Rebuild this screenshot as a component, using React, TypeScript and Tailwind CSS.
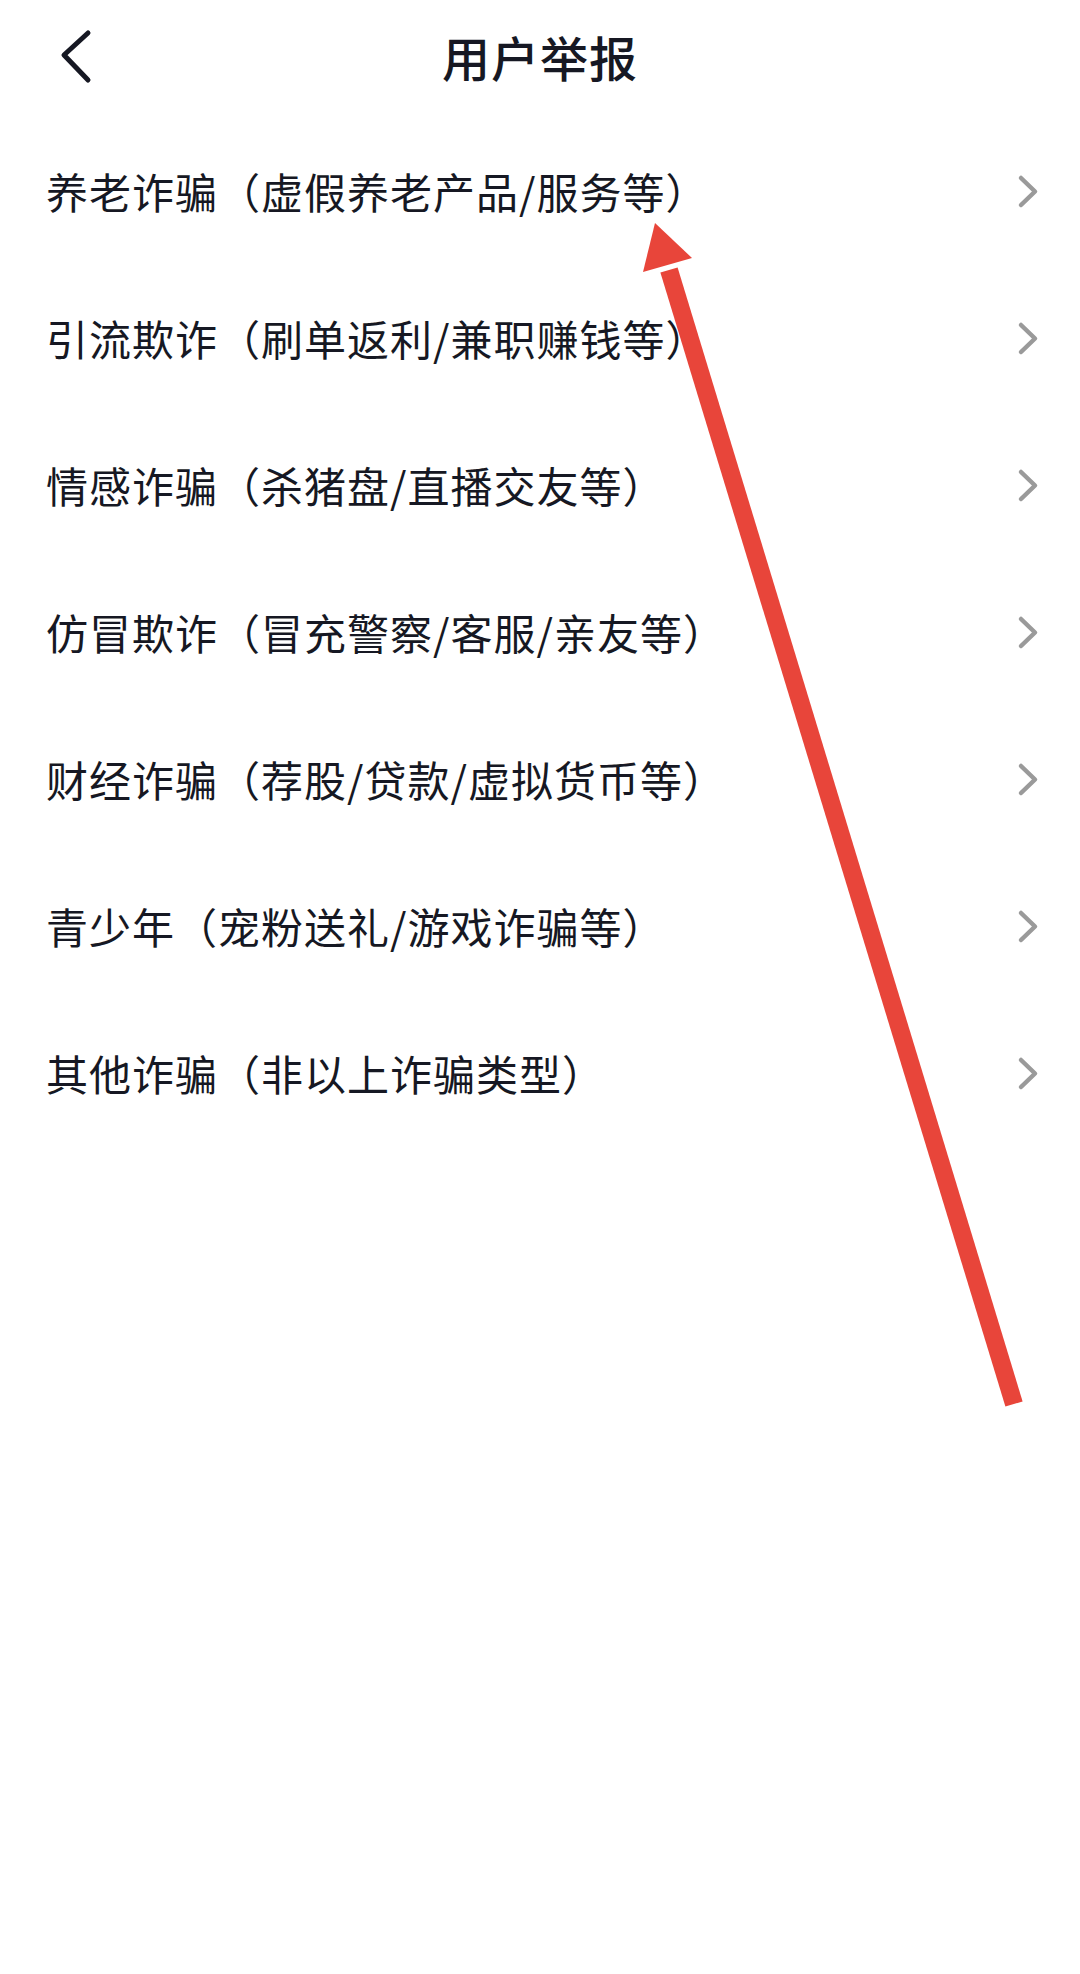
const items = [
  "养老诈骗（虚假养老产品/服务等）",
  "引流欺诈（刷单返利/兼职赚钱等）",
  "情感诈骗（杀猪盘/直播交友等）",
  "仿冒欺诈（冒充警察/客服/亲友等）",
  "财经诈骗（荐股/贷款/虚拟货币等）",
  "青少年（宠粉送礼/游戏诈骗等）",
  "其他诈骗（非以上诈骗类型）",
];

function RowChevron() {
  return (
    <svg width="24" height="40" viewBox="0 0 24 40" fill="none">
      <path
        d="M5 7 L19 20.5 L5 34"
        stroke="#9a9a9a"
        strokeWidth="4.5"
        strokeLinecap="round"
        strokeLinejoin="round"
      />
    </svg>
  );
}

export default function App() {
  return (
    <div
      className="relative w-[1080px] h-[1974px] bg-white text-[#161823] overflow-hidden"
      style={{ fontFamily: '"Noto Sans CJK SC", "Noto Sans", sans-serif' }}
    >
      {/* Header */}
      <div className="relative h-[112px] flex items-center justify-center">
        <button className="absolute left-[50px] top-[22px] w-[60px] h-[64px] flex items-center justify-center">
          <svg width="40" height="60" viewBox="0 0 40 60" fill="none">
            <path
              d="M28 9 L4 31 L28 56"
              stroke="#161823"
              strokeWidth="5"
              strokeLinecap="round"
              strokeLinejoin="round"
            />
          </svg>
        </button>
        <h1 className="text-[48px] font-medium leading-none tracking-[1px]">用户举报</h1>
      </div>

      {/* List */}
      <ul className="mt-[5px]">
        {items.map((item) => (
          <li
            key={item}
            className="h-[147px] flex items-center justify-between pl-[46px] pr-[40px]"
          >
            <span className="text-[42px] leading-none tracking-[1px]">{item}</span>
            <RowChevron />
          </li>
        ))}
      </ul>

      {/* Red annotation arrow */}
      <svg
        className="absolute inset-0 pointer-events-none"
        width="1080"
        height="1974"
        viewBox="0 0 1080 1974"
      >
        <line
          x1="1014"
          y1="1404"
          x2="669"
          y2="270"
          stroke="#e8453a"
          strokeWidth="18"
        />
        <polygon points="655,223 643,272 692,258" fill="#e8453a" />
      </svg>
    </div>
  );
}
